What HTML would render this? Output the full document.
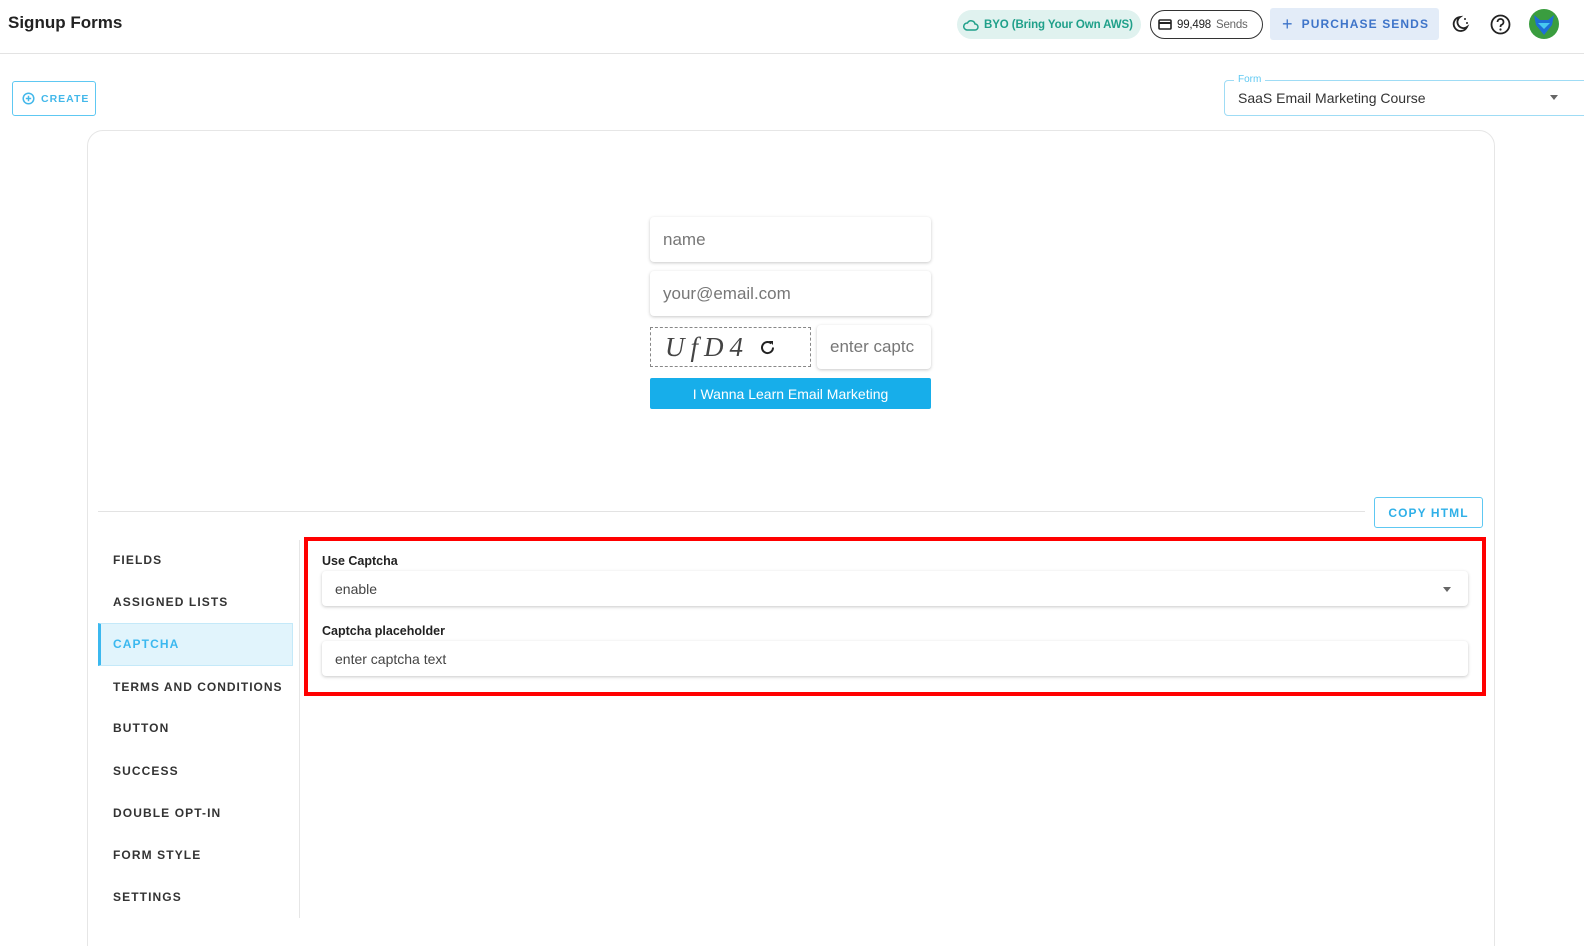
<!DOCTYPE html>
<html style="overflow:hidden;height:946px"><head><style>
*{box-sizing:border-box;margin:0;padding:0}
body{width:1584px;height:946px;overflow:hidden;background:#fff;font-family:"Liberation Sans",Roboto,sans-serif;position:relative;color:#222}
#w{position:relative;width:1584px;height:946px;overflow:hidden}
.a{position:absolute;white-space:nowrap}
.nav{position:absolute;left:113px;font-size:12px;font-weight:bold;letter-spacing:1.1px;color:#333;white-space:nowrap}
.inp{position:absolute;background:#fff;border-radius:4px;box-shadow:0 1px 3px rgba(0,0,0,.22);color:#777;font-size:17px;padding-left:13px;display:flex;align-items:center;white-space:nowrap;overflow:hidden}
</style></head><body><div id="w">
<div class="a" style="left:8px;top:13px;font-size:17px;font-weight:bold;color:#222">Signup Forms</div>
<div class="a" style="left:957px;top:10px;width:184px;height:29px;border-radius:15px;background:#e0f2ef;color:#1fa08a;font-size:11.5px;font-weight:bold;display:flex;align-items:center;padding-left:6px;gap:5px;letter-spacing:-0.1px">
<svg width="16" height="12" viewBox="0 0 16 12"><path d="M4 11h8a3 3 0 0 0 0-6 4 4 0 0 0-7.5-1A3.5 3.5 0 0 0 4 11z" fill="none" stroke="#1fa08a" stroke-width="1.5"/></svg>BYO (Bring Your Own AWS)</div>
<div class="a" style="left:1150px;top:10px;width:113px;height:29px;border-radius:15px;border:1.5px solid #333;font-size:11.5px;display:flex;align-items:center;padding-left:7px;gap:5px;color:#222;letter-spacing:-0.2px">
<svg width="14" height="11"><rect x="1" y="1" width="12" height="9" rx="1" fill="none" stroke="#222" stroke-width="1.6"/><rect x="1" y="3" width="12" height="2" fill="#222"/></svg>99,498 <span style="color:#666">Sends</span></div>
<div class="a" style="left:1270px;top:8px;width:169px;height:32px;background:#e3ecf8;border-radius:3px;color:#3e74c9;font-size:12px;font-weight:bold;letter-spacing:1.1px;display:flex;align-items:center;padding-left:12px;gap:8px"><span style="font-size:18px;font-weight:normal">+</span>PURCHASE SENDS</div>
<svg class="a" style="left:1452px;top:14px" width="18" height="20" viewBox="0 0 18 20"><path d="M8 3a7 7 0 1 0 7 10 6 6 0 0 1-7-10z" fill="none" stroke="#222" stroke-width="1.8"/><circle cx="13" cy="5" r="1" fill="#222"/><circle cx="15" cy="9" r="1" fill="#222"/></svg>
<svg class="a" style="left:1490px;top:14px" width="21" height="21" viewBox="0 0 21 21"><circle cx="10.5" cy="10.5" r="9" fill="none" stroke="#222" stroke-width="1.8"/><path d="M7.5 8a3 3 0 1 1 4 2.8c-1 .4-1 1-1 2.2" fill="none" stroke="#222" stroke-width="1.8"/><circle cx="10.5" cy="15.5" r="1.1" fill="#222"/></svg>
<div class="a" style="left:1529px;top:9px;width:30px;height:30px;border-radius:50%;background:#3a9d3f;overflow:hidden"><svg width="30" height="30"><path d="M5 6l6 5h8l6-5-2 10-8 10-8-10z" fill="#1d6fd6"/><path d="M9 14h12l-6 6z" fill="#47c9f0"/></svg></div>
<div class="a" style="left:0;top:53px;width:1584px;height:1px;background:#e3e3e3"></div>
<div class="a" style="left:12px;top:81px;width:84px;height:35px;border:1.5px solid #5ec8f2;border-radius:3px;color:#43b8ea;font-size:10.5px;font-weight:bold;letter-spacing:1px;display:flex;align-items:center;padding-left:9px;gap:6px"><svg width="13" height="13"><circle cx="6.5" cy="6.5" r="5.3" fill="none" stroke="#43b8ea" stroke-width="1.5"/><path d="M6.5 3.8v5.4M3.8 6.5h5.4" stroke="#43b8ea" stroke-width="1.5"/></svg>CREATE</div>
<div class="a" style="left:1224px;top:80px;width:370px;height:36px;border:1px solid #9fdcf5;border-radius:4px;font-size:14px;color:#333;padding:9px 13px">SaaS Email Marketing Course</div>
<div class="a" style="left:1234px;top:74px;background:#fff;padding:0 4px;font-size:10px;color:#5ec8f2">Form</div>
<div class="a" style="left:1550px;top:95px;width:0;height:0;border-left:4px solid transparent;border-right:4px solid transparent;border-top:5px solid #666"></div>
<div class="a" style="left:87px;top:130px;width:1408px;height:840px;border:1px solid #e6e6e6;border-radius:16px"></div>
<div class="inp" style="left:650px;top:217px;width:281px;height:45px">name</div>
<div class="inp" style="left:650px;top:271px;width:281px;height:45px">your@email.com</div>
<div class="a" style="left:650px;top:327px;width:161px;height:40px;border:1px dashed #888;display:flex;align-items:center;padding-left:14px;font-family:'Liberation Serif',serif;font-size:27px;letter-spacing:6px;color:#444;font-style:italic">UfD4<svg style="margin-left:10px" width="17" height="17" viewBox="0 0 17 17"><path d="M14 8.5a5.5 5.5 0 1 1-1.8-4" fill="none" stroke="#222" stroke-width="2"/><path d="M10 2h4v4z" fill="#222"/></svg></div>
<div class="inp" style="left:817px;top:325px;width:114px;height:44px">enter captc</div>
<div class="a" style="left:650px;top:378px;width:281px;height:31px;background:#17aeea;border-radius:2px;color:#fff;font-size:14px;display:flex;align-items:center;justify-content:center">I Wanna Learn Email Marketing</div>
<div class="a" style="left:98px;top:511px;width:1267px;height:1px;background:#e3e3e3"></div>
<div class="a" style="left:1374px;top:497px;width:109px;height:31px;border:1.5px solid #5ec8f2;border-radius:3px;color:#2fb0e8;font-size:12px;font-weight:bold;letter-spacing:1.1px;display:flex;align-items:center;justify-content:center">COPY HTML</div>
<div class="a" style="left:299px;top:540px;width:1px;height:378px;background:#e6e6e6"></div>
<div class="nav" style="top:553px">FIELDS</div>
<div class="nav" style="top:595px">ASSIGNED LISTS</div>
<div class="a" style="left:98px;top:623px;width:195px;height:43px;background:#e1f4fc;border:1px solid #c4e9f9;border-left:3px solid #3bb8ef"></div>
<div class="nav" style="top:637px;color:#3bb8ef">CAPTCHA</div>
<div class="nav" style="top:680px;letter-spacing:1px">TERMS AND CONDITIONS</div>
<div class="nav" style="top:721px">BUTTON</div>
<div class="nav" style="top:764px">SUCCESS</div>
<div class="nav" style="top:806px">DOUBLE OPT-IN</div>
<div class="nav" style="top:848px">FORM STYLE</div>
<div class="nav" style="top:890px">SETTINGS</div>
<div class="a" style="left:304px;top:537px;width:1182px;height:159px;border:4px solid #f00"></div>
<div class="a" style="left:322px;top:554px;font-size:12.5px;font-weight:bold;color:#222">Use Captcha</div>
<div class="inp" style="left:322px;top:571px;width:1146px;height:35px;font-size:14px;color:#444">enable</div>
<div class="a" style="left:1443px;top:587px;border-left:4px solid transparent;border-right:4px solid transparent;border-top:5px solid #666"></div>
<div class="a" style="left:322px;top:624px;font-size:12.5px;font-weight:bold;color:#222">Captcha placeholder</div>
<div class="inp" style="left:322px;top:641px;width:1146px;height:35px;font-size:14px;color:#444">enter captcha text</div>
</div></body></html>
